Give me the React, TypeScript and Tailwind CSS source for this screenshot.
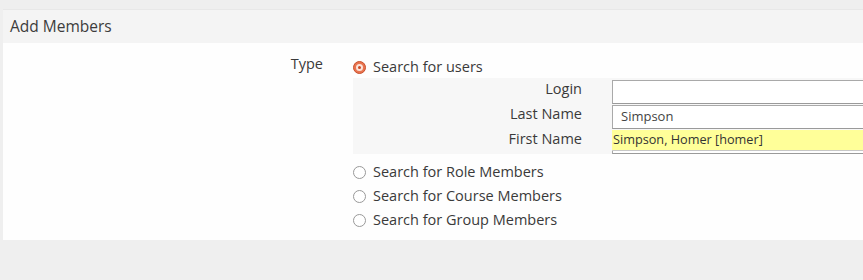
import React from "react";

function Radio({ checked, label }: { checked?: boolean; label: string }) {
  return (
    <div className="flex h-[24px] items-center">
      {checked ? (
        <span className="flex h-[13px] w-[13px] items-center justify-center rounded-full border border-[#c9502c] bg-[#e9744f]">
          <span className="h-[7px] w-[7px] rounded-full border-[2px] border-[#fbe3da] bg-[#c94a25]" />
        </span>
      ) : (
        <span className="h-[13px] w-[13px] rounded-full border border-[#999] bg-white" />
      )}
      <span className="ml-[7px] text-[14.5px] text-[#3a3a3a]">{label}</span>
    </div>
  );
}

export default function App() {
  return (
    <div
      className="h-[280px] w-[863px] overflow-hidden bg-[#efefef] pl-[3px] pt-[9px]"
      style={{ fontFamily: '"Open Sans", "Noto Sans", sans-serif' }}
    >
      <div className="flex h-[34px] items-center border-t border-[#e8e8e8] bg-[#f4f4f4] pl-[7px] text-[15.5px] text-[#3c3c3c]">
        Add Members
      </div>
      <div className="flex h-[197px] bg-[#fefefe]">
        <div className="w-[320px] shrink-0 pt-[10px] text-right text-[14.5px] text-[#3a3a3a]">Type</div>
        <div className="ml-[30px] min-w-0 flex-1 pt-[12px]">
          <Radio checked label="Search for users" />
          <div className="mt-[-1px] h-[76px] bg-[#f7f7f7] pt-[1px]">
            {[
              { label: "Login", value: "" },
              { label: "Last Name", value: "Simpson" },
              { label: "First Name", value: "" },
            ].map((r, i) => (
              <div key={r.label} className="relative flex h-[25px]">
                <div className="w-[229px] shrink-0 text-right text-[14.5px] leading-[20px] text-[#3a3a3a]">{r.label}</div>
                <div className="ml-[30px] mt-[1px] flex h-[24px] w-[300px] shrink-0 items-center border border-r-0 border-[#a9a9a9] border-b-[#9a9a9a] bg-white pl-[8px] text-[13px] text-[#444]">
                  {r.value}
                </div>
                {i === 2 && (
                  <div className="absolute left-[259px] top-[1px] flex h-[21px] w-[300px] items-center border-b border-[#c8c8c8] bg-[#ffff99] pl-[1px] text-[12.7px] text-[#333]">
                    Simpson, Homer [homer]
                  </div>
                )}
              </div>
            ))}
          </div>
          <div className="mt-[6px]">
            <Radio label="Search for Role Members" />
            <Radio label="Search for Course Members" />
            <Radio label="Search for Group Members" />
          </div>
        </div>
      </div>
    </div>
  );
}
